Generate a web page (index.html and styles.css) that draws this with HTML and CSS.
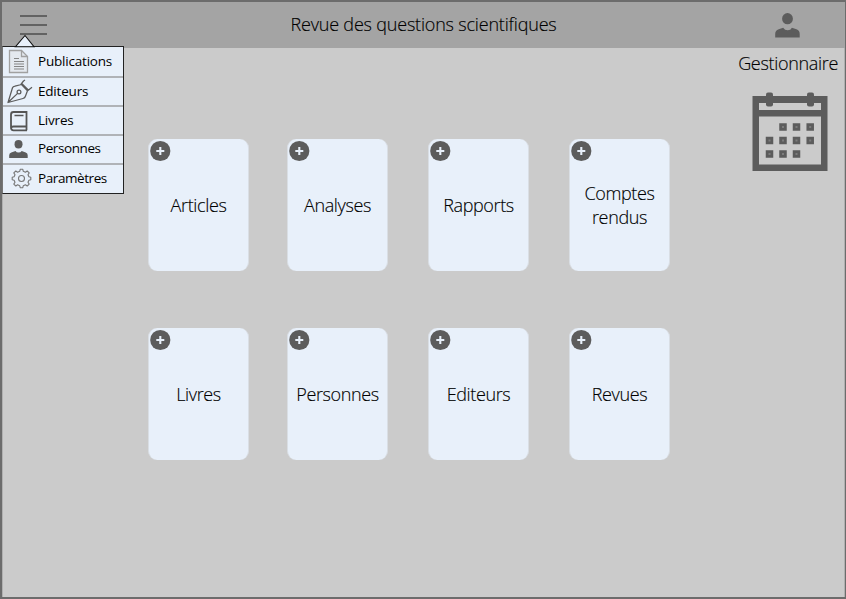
FILE: index.html
```html
<!DOCTYPE html>
<html lang="fr">
<head>
<meta charset="utf-8">
<title>Revue des questions scientifiques</title>
<link rel="stylesheet" href="styles.css">
</head>
<body>
<svg class="defs" aria-hidden="true">
  <symbol id="person" viewBox="0 0 26 26">
    <ellipse cx="12.5" cy="6.7" rx="5.4" ry="5.6"/>
    <path d="M.2 25.5V22Q.2 18.500 3.700 17.300L8.200 15.700Q9.700 18.200 12.700 18.200Q15.700 18.200 16.900 15.700L21.500 17.300Q24.700 18.500 24.700 22V25.5Z"/>
  </symbol>
  <symbol id="plus" viewBox="0 0 22 22">
    <circle cx="11.3" cy="11" r="10.1" fill="#5c5c5c"/>
    <path d="M7.300 11h8M11.300 7v8" stroke="#e8f0fa" stroke-width="2.1"/>
  </symbol>
</svg>
<div class="window">
  <header class="topbar">
    <button class="burger" aria-label="Menu"><span></span><span></span><span></span></button>
    <h1 class="title">Revue des questions scientifiques</h1>
    <svg class="account"><use href="#person"/></svg>
  </header>

  <nav class="menu">
    <svg class="pointer" viewBox="0 0 22 14"><path d="M1.5 12.7H20L11 1.5Z" fill="#e8f0fa" stroke="#111" stroke-width="1.1"/></svg>
    <a class="item pub">
      <svg class="icon" viewBox="0 0 30 28" fill="none" stroke="#a0a0a0" stroke-width="1.3">
        <path d="M6.5 2.5H18.5L24.5 8.5V24.5H6.5Z" fill="#e4e9ef"/><path d="M18.5 2.5V8.5H24.5"/>
        <path d="M11 10.5h5M11 13.5h10M11 16h10M11 18.5h10M11 21h10" stroke="#858585" stroke-width="1"/>
      </svg>
      <span>Publications</span></a>
    <a class="item edi">
      <svg class="icon" viewBox="0 0 30 28" fill="none" stroke="#5c5c5c" stroke-width="1.25" stroke-linejoin="round">
        <path d="M5 24.5L9.5 9.8Q10 8.5 12 8.2L18.5 6.5L24.5 12.7L22.5 18Q22 20 20 20.5L5 24.5ZM5 24.5L14.6 15.4M17.5 6.8L20.5 3M19 5.7L25.8 12.5M24.3 13L29 9.2M20.5 3L22 2"/>
        <circle cx="16" cy="14" r="1.9"/>
      </svg>
      <span>Editeurs</span></a>
    <a class="item liv">
      <svg class="icon" viewBox="0 0 30 28" fill="none" stroke="#555" stroke-width="1.8">
        <path d="M23.500 19.5V5H10.5Q8 5 8 7.5V20.5Q8 23.3 10.5 23.3H24M8 21.8Q8 19.5 10.5 19.5H23.500V23.3"/><path d="M11.5 8.5h9" stroke-width="1.5"/>
      </svg>
      <span>Livres</span></a>
    <a class="item per">
      <svg class="icon" viewBox="0 0 30 28" fill="#5c5c5c">
        <ellipse cx="15.5" cy="8.2" rx="4" ry="4.2"/>
        <path d="M6.2 22V19.3Q6.2 17.3 8.3 16.5L12.5 15Q13.5 16.5 15.5 16.5Q17.700 16.5 18.700 15L22.700 16.5Q24.700 17.3 24.700 19.3V22Z"/>
      </svg>
      <span>Personnes</span></a>
    <a class="item par">
      <svg class="icon" viewBox="0 0 30 28" fill="none" stroke="#777" stroke-width="1.1" stroke-linejoin="round">
        <path transform="translate(0 -1.5)" d="M16.7 7.8L17.2 5.8H19.8L20.3 7.8L22.4 8.7L24.2 7.5L26.2 9.4L25 11.3L25.9 13.3L27.8 13.8V16.2L25.9 16.7L25 18.7L26.2 20.6L24.2 22.5L22.4 21.3L20.3 22.2L19.8 24.2H17.2L16.7 22.2L14.6 21.3L12.8 22.5L10.8 20.6L12 18.7L11.1 16.7L9.2 16.2V13.8L11.1 13.3L12 11.3L10.8 9.4L12.8 7.5L14.6 8.7Z"/>
        <circle cx="18.5" cy="13.5" r="3"/>
      </svg>
      <span>Paramètres</span></a>
  </nav>

  <div class="content">
    <main class="grid">
      <article class="card"><svg class="add"><use href="#plus"/></svg><span>Articles</span></article>
      <article class="card"><svg class="add"><use href="#plus"/></svg><span>Analyses</span></article>
      <article class="card"><svg class="add"><use href="#plus"/></svg><span>Rapports</span></article>
      <article class="card"><svg class="add"><use href="#plus"/></svg><span>Comptes rendus</span></article>
      <article class="card"><svg class="add"><use href="#plus"/></svg><span>Livres</span></article>
      <article class="card"><svg class="add"><use href="#plus"/></svg><span>Personnes</span></article>
      <article class="card"><svg class="add"><use href="#plus"/></svg><span>Editeurs</span></article>
      <article class="card"><svg class="add"><use href="#plus"/></svg><span>Revues</span></article>
    </main>
    <aside class="manager">
      <span class="role">Gestionnaire</span>
      <svg class="calendar" viewBox="0 0 78 82" fill="#5c5c5c">
        <path fill-rule="evenodd" d="M1.5 5H76.5V80H1.5ZM8 12V19H70V12ZM8 25.5V73.5H70V25.5Z"/>
        <rect x="15" y="1.5" width="7" height="14" rx="2"/><rect x="56" y="1.5" width="7" height="14" rx="2"/>
        <path d="M32 36h.01M45.5 36h.01M59.2 36h.01M18.5 49.5h.01M32 49.5h.01M45.5 49.5h.01M59.2 49.5h.01M18.5 63h.01M32 63h.01M45.5 63h.01" stroke="#5c5c5c" stroke-width="7.5" stroke-linecap="square"/>
        <path d="M32 36h.01M45.5 36h.01M59.2 36h.01M18.5 49.5h.01M32 49.5h.01M45.5 49.5h.01M59.2 49.5h.01M18.5 63h.01M32 63h.01M45.5 63h.01" stroke="#7c7c7c" stroke-width="2" stroke-linecap="square"/>
      </svg>
    </aside>
  </div>
</div>
</body>
</html>
```
FILE: styles.css
```css
* { box-sizing: border-box; }
body { margin: 0; font-family: "Open Sans", "Noto Sans", sans-serif; color: #000; }
.defs { position: absolute; width: 0; height: 0; }
.window {
  position: relative;
  width: 846px;
  height: 599px;
  border: 2px solid #6c6c6c;
  border-right-width: 1px;
  background: #cbcbcb;
  box-shadow: inset 1px 0 #b0b0b0, inset -1px 0 #b0b0b0;
  overflow: hidden;
}
.topbar {
  display: grid;
  grid-template-columns: 200px 1fr 200px;
  height: 46px;
  background: #a4a4a4;
}
.burger {
  display: flex;
  flex-direction: column;
  gap: 7px;
  width: 27px;
  margin: 13px 0 0 18px;
  padding: 0;
  border: 0;
  background: none;
}
.burger span { height: 2px; background: #626262; }
.title {
  margin: 0;
  font-size: 18px;
  font-weight: 300;
  line-height: 45px;
  letter-spacing: -.19px;
  text-align: center;
  white-space: nowrap;
  -webkit-text-stroke: .15px #000;
}
.account { width: 26px; height: 26px; margin: 10px 0 0 130px; fill: #5c5c5c; }

.menu {
  position: absolute;
  left: 0;
  top: 44px;
  width: 122px;
  border: 1px solid #222;
  border-left-color: #777;
  background: #e8f0fa;
  z-index: 2;
}
.pointer { position: absolute; left: 11px; top: -13px; width: 22px; height: 14px; }
.item {
  display: flex;
  align-items: center;
  height: 29px;
  border-bottom: 2px solid #b0b3b7;
  font-size: 13.5px;
  line-height: 18px;
  letter-spacing: -.2px;
}
.item:last-child { border-bottom: 0; }
.icon { flex: none; width: 30px; height: 28px; }
.item span { margin: 0 0 2px 5px; }
.pub { height: 31px; }
.edi { height: 29px; }
.per, .par { letter-spacing: -.42px; }
.item.per span { margin-bottom: 4px; }
.par { height: 28px; }

.content { display: flex; justify-content: space-between; }
.grid {
  display: grid;
  grid-template-columns: 139px 141px 141px 100px;
  grid-template-rows: 132px 132px;
  row-gap: 57px;
  margin: 91px 0 0 146px;
}
.card {
  position: relative;
  display: flex;
  align-items: center;
  justify-content: center;
  width: 101px;
  padding-bottom: 1px;
  border: solid #d9dee4;
  border-width: 0 1px;
  border-radius: 9px;
  background: #e8f0fa;
  font-size: 18px;
  font-weight: 300;
  line-height: 24px;
  letter-spacing: -.37px;
  text-align: center;
  -webkit-text-stroke: .15px #000;
}
.add { position: absolute; left: 0; top: 1px; width: 22px; height: 22px; }
.manager { display: flex; flex-direction: column; align-items: flex-end; padding: 3px 7px 0 0; }
.role { font-size: 18px; font-weight: 300; line-height: 24px; letter-spacing: -.32px; -webkit-text-stroke: .15px #000; }
.calendar { width: 78px; height: 82px; margin: 16px 9px 0 0; filter: blur(.7px); }
```
